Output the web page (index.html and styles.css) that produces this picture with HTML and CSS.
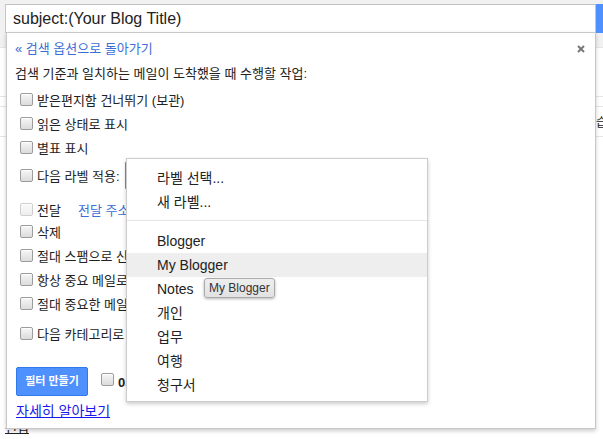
FILE: index.html
```html
<!DOCTYPE html>
<html lang="ko">
<head>
<meta charset="utf-8">
<title>Filter</title>
<link rel="stylesheet" href="styles.css">
</head>
<body>
<header class="topbar">
  <div class="search">
    <div class="search-box">subject:(Your Blog Title)</div>
    <div class="search-btn"></div>
  </div>
</header>
<main class="content">
  <div class="strip strip-a"></div>
  <div class="strip strip-b"></div>
  <div class="strip strip-c"><span class="side-text">학습</span></div>
  <div class="bottom-text">편집</div>
</main>

<section class="filter-panel">
  <div class="panel-head">
    <a class="back-link">« 검색 옵션으로 돌아가기</a>
    <svg class="close" width="8" height="8" viewBox="0 0 8 8"><path d="M1 1L7 7M7 1L1 7" stroke="#777" stroke-width="2"/></svg>
  </div>
  <div class="intro">검색 기준과 일치하는 메일이 도착했을 때 수행할 작업:</div>
  <div class="opts">
    <div class="row"><span class="cb"></span><span>받은편지함 건너뛰기 (보관)</span></div>
    <div class="row"><span class="cb"></span><span>읽은 상태로 표시</span></div>
    <div class="row"><span class="cb"></span><span>별표 표시</span></div>
    <div class="row row-label"><span class="cb"></span><span>다음 라벨 적용:</span><span class="select">라벨 선택...</span></div>
    <div class="row row-fwd"><span class="cb cb-off"></span><span>전달</span><a class="fwd-link">전달 주소 추가</a></div>
    <div class="row row-del"><span class="cb"></span><span>삭제</span></div>
    <div class="row"><span class="cb"></span><span>절대 스팸으로 신고하지 않음</span></div>
    <div class="row"><span class="cb"></span><span>항상 중요 메일로 표시</span></div>
    <div class="row"><span class="cb"></span><span>절대 중요한 메일로 표시 안함</span></div>
    <div class="row row-cat"><span class="cb"></span><span>다음 카테고리로 분류:</span></div>
  </div>
  <div class="actions">
    <span class="btn">필터 만들기</span>
    <span class="cb"></span>
    <b class="apply">0개의 일치하는 대화에도 필터 적용</b>
  </div>
  <a class="learn">자세히 알아보기</a>
</section>

<ul class="label-menu">
  <li>라벨 선택...</li>
  <li>새 라벨...</li>
  <li class="sep"></li>
  <li>Blogger</li>
  <li class="hover">My Blogger</li>
  <li>Notes</li>
  <li>개인</li>
  <li>업무</li>
  <li>여행</li>
  <li>청구서</li>
</ul>
<div class="tooltip">My Blogger</div>
</body>
</html>
```

FILE: styles.css
```css
html, body {
  margin: 0;
  padding: 0;
}
body {
  width: 603px;
  height: 439px;
  overflow: hidden;
  position: relative;
  background: #fff;
  color: #222;
  font-family: "Liberation Sans", "Noto Sans CJK KR", sans-serif;
}

.topbar {
  box-sizing: border-box;
  height: 48px;
  padding-top: 4px;
  background: #f1f1f1;
  border-bottom: 1px solid #e5e5e5;
}
.search {
  display: flex;
  height: 29px;
  margin-left: 5px;
}
.search-box {
  box-sizing: border-box;
  width: 591px;
  flex: none;
  background: #fff;
  border: 1px solid #c6c6c6;
  border-top-color: #c0c0c0;
  padding-left: 7px;
  font-size: 16px;
  line-height: 27px;
  color: #222;
}
.search-btn {
  flex: none;
  width: 12px;
  background: #4d90fe;
}

.content {
  font-size: 12px;
}
.strip {
  border-bottom: 1px solid #e5e5e5;
}
.strip-a { height: 48px; }
.strip-b { height: 9px; }
.strip-c {
  height: 29px;
  line-height: 29px;
  padding-left: 585px;
  white-space: nowrap;
  font-family: "Noto Sans CJK KR", sans-serif;
}
.bottom-text {
  margin-top: 282px;
  margin-left: 5px;
  line-height: 16px;
  font-size: 13px;
  text-decoration: underline;
  font-family: "Noto Sans CJK KR", sans-serif;
}

.filter-panel {
  position: absolute;
  left: 6px;
  top: 32px;
  width: 590px;
  height: 397px;
  box-sizing: border-box;
  background: #fff;
  border: 1px solid #c8c8c8;
  box-shadow: 0 2px 4px rgba(0, 0, 0, 0.2);
  padding: 7px 10px 0 8px;
  font-size: 13px;
  font-family: "Liberation Sans", "Noto Sans CJK KR", sans-serif;
}
.panel-head {
  display: flex;
  justify-content: space-between;
  align-items: center;
  height: 18px;
  line-height: 18px;
}
.back-link {
  color: #3b6ed6;
}
.close {
  display: block;
}
.intro {
  margin-top: 7px;
  line-height: 18px;
}
.opts {
  margin-top: 4px;
  padding-left: 5px;
}
.row {
  display: flex;
  align-items: center;
  height: 24px;
  white-space: nowrap;
}
.cb {
  flex: none;
  box-sizing: border-box;
  width: 13px;
  height: 13px;
  margin-right: 4px;
  border: 1px solid #9c9c9c;
  border-radius: 2px;
  background: linear-gradient(#f6f6f6, #dcdcdc);
  box-shadow: inset 0 1px 0 #fff;
}
.cb-off {
  border-color: #cfcfcf;
  background: linear-gradient(#fafafa, #eeeeee);
}
.row-label {
  height: 32px;
}
.select {
  box-sizing: border-box;
  height: 27px;
  margin-left: 5px;
  padding-left: 10px;
  line-height: 25px;
  width: 120px;
  border: 1px solid #4d90fe;
  border-radius: 0 2px 2px 0;
}
.row-fwd {
  height: 20px;
  margin-top: 8px;
}
.fwd-link {
  margin-left: 17px;
  color: #3b6ed6;
}
.row-cat {
  margin-top: 6px;
}
.actions {
  display: flex;
  align-items: center;
  margin-top: 22px;
  margin-left: 1px;
  height: 29px;
  white-space: nowrap;
}
.btn {
  box-sizing: border-box;
  width: 72px;
  height: 29px;
  margin-right: 13px;
  background: #4d90fe;
  border: 1px solid #3079ed;
  border-radius: 2px;
  color: #fff;
  font-weight: bold;
  font-size: 11px;
  line-height: 27px;
  text-align: center;
}
.actions .cb {
  margin-top: -4px;
}
.apply {
  font-size: 13px;
}
.learn {
  display: block;
  width: max-content;
  margin-top: 7px;
  margin-left: 1px;
  line-height: 16px;
  font-size: 14px;
  color: #1a1aee;
  text-decoration: underline;
}

.label-menu {
  position: absolute;
  left: 126px;
  top: 158px;
  width: 302px;
  height: 244px;
  box-sizing: border-box;
  margin: 0;
  padding: 7px 0 5px;
  list-style: none;
  background: #fff;
  border: 1px solid #ccc;
  box-shadow: 0 2px 4px rgba(0, 0, 0, 0.2);
  font-size: 14px;
  color: #222;
}
.label-menu li {
  height: 24px;
  line-height: 24px;
  padding-left: 30px;
}
.label-menu li.sep {
  height: 0;
  margin: 6px 0 8px;
  border-top: 1px solid #e5e5e5;
  padding: 0;
}
.label-menu li.hover {
  background: #eee;
}

.tooltip {
  position: absolute;
  left: 204px;
  top: 278px;
  box-sizing: border-box;
  height: 20px;
  padding: 0 4px;
  line-height: 18px;
  font-size: 12px;
  color: #333;
  background: linear-gradient(#eee, #e2e2e2);
  border: 1px solid #aaa;
  border-radius: 3px;
  box-shadow: 0 1px 3px rgba(0, 0, 0, 0.3);
  white-space: nowrap;
}
```
